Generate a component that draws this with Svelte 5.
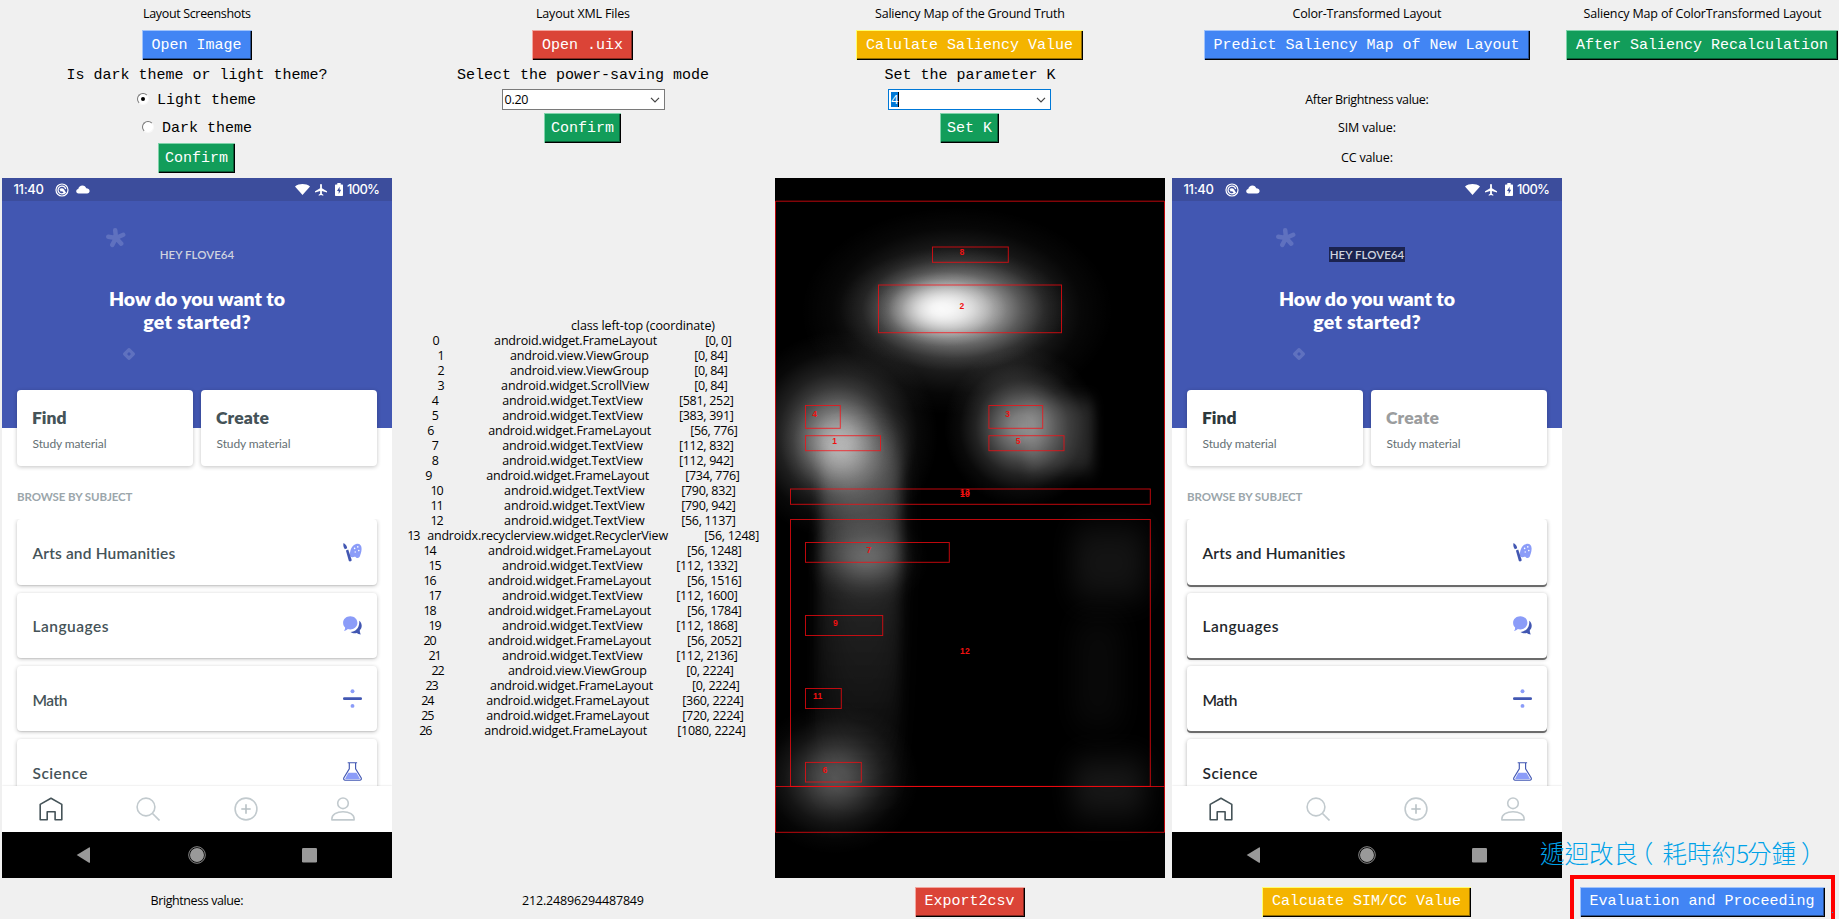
<script>
  // Spreads a label's letters so that it takes the given width.
  function fit(node, width) {
    node.style.letterSpacing = '0px';
    const natural = node.getBoundingClientRect().width;
    const count = Math.max(1, node.textContent.length - 1);
    const spacing = (width - natural) / count;
    node.style.letterSpacing = `${spacing}px`;
    node.style.marginRight = `${-spacing}px`;
  }

  const sizes = {
    'android.widget.FrameLayout': 163,
    'android.view.ViewGroup': 138.7,
    'android.widget.ScrollView': 148,
    'android.widget.TextView': 140.7,
    'androidx.recyclerview.widget.RecyclerView': 241
  };
  const F = 'android.widget.FrameLayout';
  const V = 'android.view.ViewGroup';
  const S = 'android.widget.ScrollView';
  const T = 'android.widget.TextView';
  const R = 'androidx.recyclerview.widget.RecyclerView';

  // class, coordinate, then the starts of the three parts and the end of the last (thirds of a pixel)
  const nodes = [
    [F, '[0, 0]', 98, 283, 917, 997],
    [V, '[0, 84]', 113, 331, 884, 985],
    [V, '[0, 84]', 113, 331, 884, 985],
    [S, '[0, 84]', 113, 304, 884, 985],
    [T, '[581, 252]', 96, 307, 838, 1003],
    [T, '[383, 391]', 96, 307, 838, 1003],
    [F, '[56, 776]', 82, 265, 872, 1015],
    [T, '[112, 832]', 96, 307, 838, 1003],
    [T, '[112, 942]', 96, 307, 838, 1003],
    [F, '[734, 776]', 76, 259, 857, 1021],
    [T, '[790, 832]', 92, 313, 845, 1009],
    [T, '[790, 942]', 92, 313, 845, 1009],
    [T, '[56, 1137]', 92, 313, 845, 1009],
    [R, '[56, 1248]', 22, 82, 914, 1079],
    [F, '[56, 1248]', 71, 265, 862, 1027],
    [T, '[112, 1332]', 86, 307, 830, 1015],
    [F, '[56, 1516]', 71, 265, 862, 1027],
    [T, '[112, 1600]', 86, 307, 830, 1015],
    [F, '[56, 1784]', 71, 265, 862, 1027],
    [T, '[112, 1868]', 86, 307, 830, 1015],
    [F, '[56, 2052]', 71, 265, 862, 1027],
    [T, '[112, 2136]', 86, 307, 830, 1015],
    [V, '[0, 2224]', 95, 325, 860, 1003],
    [F, '[0, 2224]', 77, 271, 877, 1021],
    [F, '[360, 2224]', 64, 259, 848, 1033],
    [F, '[720, 2224]', 64, 259, 848, 1033],
    [F, '[1080, 2224]', 58, 253, 833, 1039]
  ];

  const subjects = [
    { name: 'Arts and Humanities', width: 143, icon: 'arts' },
    { name: 'Languages', width: 76, icon: 'chat' },
    { name: 'Math', width: 35, icon: 'math' },
    { name: 'Science', width: 55, icon: 'flask' }
  ];

  // x1, y1, x2, y2, label, label centre
  const boxes = [
    [157.5, 69, 233.3, 84.3, '8', 187, 73.7],
    [103.5, 107, 286.5, 154.7, '2', 187, 128],
    [30.5, 227.5, 65.3, 250.3, '4', 39.7, 236],
    [30.5, 257.7, 105.5, 272.7, '1', 59.7, 262.3],
    [213.9, 227.5, 267.7, 250.3, '3', 232.8, 236],
    [213.9, 257.7, 289, 272.7, '5', 243.3, 262.3],
    [15.5, 311, 375.3, 326.3, '10', 190, 315.3],
    [15.5, 341.5, 375.3, 608.4, '12', 190, 472.3],
    [30.5, 364.5, 174.3, 384.3, '7', 94, 371.5],
    [30.5, 437.5, 107.7, 457.5, '9', 60.4, 444.7],
    [30.5, 510.5, 66.3, 530.5, '11', 42.7, 518],
    [30.5, 584.4, 86.3, 604, '6', 50, 591.3]
  ];
</script>

{#snippet btn(text, tone, pad = 10)}
  <button class="btn {tone}" style:padding="0 {pad + 0.4}px 0 {pad - 0.4}px">{text}</button>
{/snippet}

{#snippet subjectIcon(kind)}
  <svg class="subject-icon" viewBox="0 0 19 19">
    {#if kind === 'arts'}
      <path d="M13.200.9c3.400-.7 5.600 1.400 5.400 5-.1 3.300-1.300 5.600-1.600 7.200-.6 2.100-2.700 2.500-4 1.300-1-1-2.200-.4-3.400-.2-1.900.2-2.900-1.200-2.700-3.400C7.200 6 9.500 1.700 13.200.9z" fill="#8b9cf8" />
      <g fill="#fff"><circle cx="14.800" cy="3.900" r=".8" /><circle cx="11.600" cy="5.400" r=".8" /><circle cx="15.800" cy="7.600" r=".8" /><circle cx="12.200" cy="9" r=".7" /></g>
      <path d="M.5 0c2 1.200 3.700 3 3.700 5.200l-2.300 1C.4 4.600 0 2.200.5 0z" fill="#4257b2" />
      <path d="M2.900 7.500l2.300-1 3.500 10.400c.2 1.500-2.200 2.300-2.900.9z" fill="#4257b2" />
    {:else if kind === 'chat'}
      <path d="M16.200 4.800c3.300 2.600 3.200 7 .6 9.500 0 1.700.5 3 .9 4.300-1.600-.3-2.900-.9-4-1.700-2.100.7-4.500.3-6.200-1 5 0 9.400-4.400 8.700-11.100z" fill="#4257b2" />
      <path d="M7.300.2c4 0 7.100 2.800 7.100 6.600s-3.200 6.700-7.100 6.700c-.9 0-1.700-.1-2.500-.4-1 1-2.400 1.700-3.900 2 .9-1 1.300-2.300 1.200-3.500C.8 10.400.1 8.700.1 6.800.1 3 3.300.2 7.300.2z" fill="#8b9cf8" />
    {:else if kind === 'math'}
      <rect x="0" y="8.300" width="19" height="2.700" rx="1.300" fill="#4257b2" />
      <circle cx="9.500" cy="2.300" r="1.950" fill="#8b9cf8" /><circle cx="9.500" cy="16.900" r="1.950" fill="#8b9cf8" />
    {:else}
      <path d="M5.300 10.700h8.200l3.200 5.500c.3.600 0 1.100-.7 1.100H3c-.7 0-1-.5-.7-1.100z" fill="#8b9cf8" />
      <path d="M4.700.7h9.400M6.300.9v6L.9 15.800c-.6 1.200 0 2.400 1.300 2.400h14.600c1.300 0 1.900-1.200 1.300-2.400L12.600 6.900v-6" fill="none" stroke="#4257b2" stroke-width="1.150" />
    {/if}
  </svg>
{/snippet}

{#snippet phone(transformed)}
  <div class="phone" class:transformed>
    <div class="status">
      <span class="clock" use:fit={30.5}>11:40</span>
      <svg class="st-ring" viewBox="0 0 14 14">
        <circle cx="7" cy="7" r="6" fill="none" stroke="#fff" stroke-width="1.200" />
        <path d="M9.900 9.500A3.900 3.900 0 1 1 10.700 6" fill="none" stroke="#fff" stroke-width="1.300" />
        <path d="M4.500 6.200a3 3 0 0 1 4.600.3l2 3.200-1.500 1-2.400-2.400-1.600.1z" fill="#fff" />
      </svg>
      <svg class="st-cloud" viewBox="0 0 14 9">
        <path d="M2.600 8.400C1 8.400.2 7.400.2 6.200c0-1.200.9-2 2-2.200C2.800 1.800 4.300.4 6.400.4c2 0 3.300 1.200 3.900 2.900 1.700.1 3.300 1 3.300 2.700 0 1.500-1 2.400-2.500 2.400z" fill="#fff" />
      </svg>
      <svg class="st-wifi" viewBox="0 0 15 11">
        <path d="M0 2.400C4.200-.7 10.800-.7 15 2.400L7.500 11z" fill="#fff" />
      </svg>
      <svg class="st-plane" viewBox="0 0 12 12">
        <path d="M6 0c.6 0 .9.500.9 1.100v3.100L12 7.200v1.300L6.900 7v2.700l1.400 1.100v.9L6 11.100l-2.300.6v-.9l1.400-1.100V7L0 8.500V7.200l5.100-3V1.100C5.100.5 5.400 0 6 0z" fill="#fff" />
      </svg>
      <svg class="st-batt" viewBox="0 0 8 13">
        <path d="M2.300 0h3.400v1.500H7c.6 0 1 .4 1 1V12c0 .6-.4 1-1 1H1c-.6 0-1-.4-1-1V2.500c0-.6.4-1 1-1h1.300z" fill="#fff" />
        <path d="M4.600 3.700L2 7.900h1.700v3L6.200 6.700H4.600z" fill="#3c4d9c" />
      </svg>
      <div class="charge"><span use:fit={33}>100%</span></div>
    </div>
    <div class="hero">
      <svg class="star" viewBox="0 0 20 20">
        <path d="M10 10L9.200 2.300M10 10l7.200-3.200M10 10l5.200 5.600M10 10l-3.700 6.900M10 10L2.300 8.700" stroke="#5f71bf" stroke-width="4.500" stroke-linecap="round" />
      </svg>
      <svg class="gem" viewBox="0 0 12 12">
        <path d="M6 1.700L10.300 6 6 10.300 1.700 6z" fill="none" stroke="#5f71bf" stroke-width="3.300" stroke-linejoin="round" />
      </svg>
      <div class="hey"><span use:fit={74.5}>HEY FLOVE64</span></div>
      <div class="ask"><span use:fit={176}>How do you want to</span></div>
      <div class="ask second"><span use:fit={107.5}>get started?</span></div>
    </div>
    <div class="tiles">
      <div class="tile"><div><b use:fit={34.5}>Find</b></div><div class="sub"><span use:fit={74}>Study material</span></div></div>
      <div class="tile create"><div><b use:fit={53}>Create</b></div><div class="sub"><span use:fit={74}>Study material</span></div></div>
    </div>
    <div class="browse"><span use:fit={115.5}>BROWSE BY SUBJECT</span></div>
    <div class="list">
      {#each subjects as s}
        <div class="item"><span use:fit={s.width}>{s.name}</span>{@render subjectIcon(s.icon)}</div>
      {/each}
    </div>
    <div class="tabs">
      <svg viewBox="0 0 24 24"><path d="M1.200 22.700V7.400L12 1.200l10.800 6.200v15.300h-6.700v-7.900H8.200v7.900z" fill="none" stroke="#455358" stroke-width="1.600" stroke-linejoin="round" /></svg>
      <svg viewBox="0 0 24 24"><circle cx="10" cy="10" r="8.900" fill="none" stroke="#c2cace" stroke-width="1.600" /><path d="M16.500 16.500l7 7" stroke="#c2cace" stroke-width="1.700" /></svg>
      <svg viewBox="0 0 24 24"><circle cx="12" cy="12" r="10.900" fill="none" stroke="#c2cace" stroke-width="1.600" /><path d="M12 7.300v9.400M7.300 12h9.400" stroke="#b8c1c5" stroke-width="1.600" /></svg>
      <svg viewBox="0 0 24 24"><circle cx="12" cy="6.300" r="5.300" fill="none" stroke="#c2cace" stroke-width="1.600" /><path d="M.9 22.900v-1.200c0-4.200 4.700-7 11.100-7s11.100 2.800 11.100 7v1.200z" fill="none" stroke="#c2cace" stroke-width="1.600" stroke-linejoin="round" /></svg>
    </div>
    <svg class="sys" viewBox="0 0 390 46" fill="#999">
      <path d="M74.700 23L87 15.400q1-.4 1 .6v14.200q0 .9-1 .5z" />
      <circle cx="195" cy="23" r="8.300" fill="none" stroke="#999" stroke-width=".9" /><circle cx="195" cy="23" r="7" />
      <rect x="300" y="16" width="15" height="14.500" rx="1.300" />
    </svg>
  </div>
{/snippet}

<main>
  <div class="cell t"><span use:fit={108}>Layout Screenshots</span></div>
  <div class="cell t"><span use:fit={94}>Layout XML Files</span></div>
  <div class="cell t"><span use:fit={190}>Saliency Map of the Ground Truth</span></div>
  <div class="cell t"><span use:fit={149}>Color-Transformed Layout</span></div>
  <div class="cell t"><span use:fit={238}>Saliency Map of ColorTransformed Layout</span></div>

  <div class="cell">{@render btn('Open Image', 'blue')}</div>
  <div class="cell">{@render btn('Open .uix', 'red')}</div>
  <div class="cell">{@render btn('Calulate Saliency Value', 'amber')}</div>
  <div class="cell">{@render btn('Predict Saliency Map of New Layout', 'blue')}</div>
  <div class="cell">{@render btn('After Saliency Recalculation', 'green')}</div>

  <div class="cell mono">Is dark theme or light theme?</div>
  <div class="cell mono">Select the power-saving mode</div>
  <div class="cell mono">Set the parameter K</div>
  <div></div><div></div>

  <label class="cell mono choice"><i class="radio on"></i>Light theme</label>
  <div class="cell">
    <div class="combo"><span use:fit={24}>0.20</span><svg viewBox="0 0 10 6"><path d="M1 .8l4 4 4-4" /></svg></div>
  </div>
  <div class="cell">
    <div class="combo focus"><span class="sel">4</span><svg viewBox="0 0 10 6"><path d="M1 .8l4 4 4-4" /></svg></div>
  </div>
  <div class="cell t"><span use:fit={123.5}>After Brightness value:</span></div>
  <div></div>

  <label class="cell mono choice dark"><i class="radio"></i>Dark theme</label>
  <div class="cell">{@render btn('Confirm', 'green', 7)}</div>
  <div class="cell">{@render btn('Set K', 'green', 7)}</div>
  <div class="cell t"><span use:fit={58}>SIM value:</span></div>
  <div></div>

  <div class="cell">{@render btn('Confirm', 'green', 7)}</div>
  <div></div><div></div>
  <div class="cell t"><span use:fit={52}>CC value:</span></div>
  <div></div>

  <div class="cell">{@render phone(false)}</div>
  <div class="nodes">
    <div class="nodes-head"><span use:fit={144}>class left-top (coordinate)</span></div>
    {#each nodes as [cls, pos, a, b, c, d], i}
      <div class="node" style:padding-left="{a / 3 + 5.800}px" style:grid-template-columns="{(b - a) / 3}px {(c - b) / 3 - 0.200}px auto">
        <div><span use:fit={i > 9 ? 13.300 : 6.700}>{i}</span></div>
        <div><span use:fit={sizes[cls]}>{cls}</span></div>
        <div><span use:fit={(d - c) / 3}>{pos}</span></div>
      </div>
    {/each}
  </div>
  <div class="cell">
    <svg class="saliency" viewBox="0 0 390 700">
      <defs>
        <radialGradient id="glow">
          <stop offset="0" stop-color="#fff" stop-opacity="1" />
          <stop offset=".15" stop-color="#fff" stop-opacity=".91" />
          <stop offset=".3" stop-color="#fff" stop-opacity=".7" />
          <stop offset=".45" stop-color="#fff" stop-opacity=".46" />
          <stop offset=".6" stop-color="#fff" stop-opacity=".25" />
          <stop offset=".8" stop-color="#fff" stop-opacity=".07" />
          <stop offset="1" stop-color="#fff" stop-opacity="0" />
        </radialGradient>
        <linearGradient id="trail" x1="0" y1="0" x2="0" y2="1">
          <stop offset="0" stop-color="#fff" stop-opacity="0" />
          <stop offset=".12" stop-color="#fff" stop-opacity=".26" />
          <stop offset=".34" stop-color="#fff" stop-opacity=".31" />
          <stop offset=".42" stop-color="#fff" stop-opacity=".15" />
          <stop offset=".7" stop-color="#fff" stop-opacity=".08" />
          <stop offset="1" stop-color="#fff" stop-opacity="0" />
        </linearGradient>
        <filter id="soft" x="-60%" y="-60%" width="220%" height="220%" color-interpolation-filters="sRGB"><feGaussianBlur stdDeviation="13 16" /></filter>
        <filter id="edge" x="-60%" y="-20%" width="220%" height="140%" color-interpolation-filters="sRGB"><feGaussianBlur stdDeviation="6 9" /></filter>
      </defs>
      <rect width="390" height="700" fill="#000" />
      <ellipse cx="182" cy="133" rx="156" ry="104" fill="url(#glow)" opacity=".4" />
      <ellipse cx="178" cy="131" rx="114" ry="62" fill="url(#glow)" opacity=".72" />
      <ellipse cx="166" cy="131" rx="66" ry="38" fill="url(#glow)" opacity=".9" />
      <ellipse cx="63" cy="257" rx="100" ry="104" fill="url(#glow)" opacity=".5" />
      <ellipse cx="64" cy="268" rx="58" ry="60" fill="url(#glow)" opacity=".38" />
      <path d="M48 240h78v400H36z" fill="url(#trail)" filter="url(#edge)" opacity=".55" />
      <path d="M62 240h60v400H50z" fill="url(#trail)" filter="url(#soft)" opacity=".5" />
      <ellipse cx="92" cy="382" rx="62" ry="48" fill="url(#glow)" opacity=".2" />
      <ellipse cx="247" cy="249" rx="78" ry="80" fill="url(#glow)" opacity=".54" />
      <rect x="252" y="222" width="67" height="72" fill="#fff" opacity=".13" filter="url(#edge)" />
      <ellipse cx="60" cy="600" rx="84" ry="76" fill="url(#glow)" opacity=".32" />
      <rect x="298" y="350" width="72" height="70" fill="#fff" opacity=".075" filter="url(#soft)" />
      <rect x="298" y="440" width="50" height="110" fill="#fff" opacity=".03" filter="url(#soft)" />
      <rect x="298" y="582" width="72" height="55" fill="#fff" opacity=".09" filter="url(#soft)" />
      <g fill="none" stroke="#ff0a10" stroke-opacity=".74" stroke-width="1">
        <path d="M.5 654.300V23.200h389v631.100zM.5 608.500h389" />
        {#each boxes as [x1, y1, x2, y2]}
          <rect x={x1} y={y1} width={x2 - x1} height={y2 - y1} />
        {/each}
      </g>
      <g class="marks">
        {#each boxes as [, , , , label, cx, cy]}
          <text x={cx} y={cy + 3.200}>{label}</text>
        {/each}
        <text x="190" y="316.500">13</text>
      </g>
    </svg>
  </div>
  <div class="cell">{@render phone(true)}</div>
  <div></div>

  <div class="cell t"><span use:fit={93}>Brightness value:</span></div>
  <div class="cell t"><span use:fit={122}>212.24896294487849</span></div>
  <div class="cell">{@render btn('Export2csv', 'red')}</div>
  <div class="cell">{@render btn('Calcuate SIM/CC Value', 'amber')}</div>
  <div class="cell">{@render btn('Evaluation and Proceeding', 'blue')}</div>

  <div class="note">遞迴改良<span class="open">（</span>耗時約<span class="five">5</span>分鍾<span class="close">）</span></div>
  <div class="mark-box"></div>
  <i class="speck"></i>
</main>

<style>
  :global(body) { background: #f0f0f0; overflow: hidden; }
  main {
    position: relative;
    width: 1839px;
    height: 919px;
    overflow: hidden;
    display: grid;
    grid-template-columns: 394px 378px 396px 398px 273px;
    grid-template-rows: 28px 34px 26px 24px 32px 28px 712px 35px;
    background: #f0f0f0;
    color: #000;
    font: 12.5px/15px "Open Sans", "Noto Sans", sans-serif;
  }
  .cell { display: flex; align-items: center; justify-content: center; min-width: 0; min-height: 0; white-space: nowrap; }
  .t { font-size: 12.5px; padding-bottom: 1.500px; }
  .mono { font: 15px/17px "Liberation Mono", monospace; }
  .btn {
    flex: none;
    box-sizing: border-box;
    height: 30px;
    margin: 0 0 0 -.3px;
    border: 0;
    border-radius: 0;
    font: 15px/17px "Liberation Mono", monospace;
    color: #fff;
    white-space: nowrap;
  }
  .blue { background: #4285f4; box-shadow: inset 1px 1px #a0c3fb, inset -1px -1px #000, inset -2px -2px #274f92; }
  .red { background: #db4437; box-shadow: inset 1px 1px #f3a69f, inset -1px -1px #000, inset -2px -2px #832821; }
  .amber { background: #f4b400; box-shadow: inset 1px 1px #ffff70, inset -1px -1px #000, inset -2px -2px #926c00; }
  .green { background: #129d5a; box-shadow: inset 1px 1px #7fd3aa, inset -1px -1px #000, inset -2px -2px #095e36; }

  .choice { gap: 8px; padding-right: 1px; }
  .dark { padding-right: 0; }
  .radio {
    box-sizing: border-box; width: 12px; height: 12px; margin-top: -2px; border-radius: 50%;
    background: #fff; border: 1.500px solid; border-color: #777 #f8f8f8 #f8f8f8 #777;
    display: flex; align-items: center; justify-content: center;
  }
  .on::after { content: ""; width: 4px; height: 4px; border-radius: 50%; background: #000; }

  .combo {
    box-sizing: border-box; width: 163px; height: 21px; padding: 0 4px 0 2px; margin: -1px 0 0;
    border: 1px solid #7a7a7a; background: #fff; display: flex; align-items: center; justify-content: space-between;
  }
  .combo.focus { border-color: #0078d7; margin-left: -.4px; }
  .combo svg { width: 10px; height: 6px; fill: none; stroke: #444; stroke-width: 1.200; }
  .sel { background: #0078d7; color: #fff; border-right: 1px solid #000; line-height: 15px; }

  .nodes { display: flex; flex-direction: column; justify-content: center; white-space: nowrap; }
  .nodes-head { height: 15px; padding-left: 177px; }
  .node { display: grid; height: 15px; }

  .phone {
    width: 390px; height: 700px; flex: none; display: flex; flex-direction: column; overflow: hidden;
    background: linear-gradient(#4257b2 250px, #fff 250px); font-family: Lato, sans-serif; color: #455358;
  }
  .status { height: 23px; flex: none; display: flex; align-items: center; background: #3c4d9c; color: #fff; font: 500 13px/23px Inter, sans-serif; }
  .status span { font-size: 13px; }
  .clock { margin-left: 11.500px; }
  .st-ring { width: 14px; height: 14px; margin-left: 10.500px; }
  .st-cloud { width: 14px; height: 9px; margin-left: 7px; }
  .st-wifi { width: 15px; height: 11px; margin-left: auto; }
  .st-plane { width: 12px; height: 12px; margin-left: 5px; }
  .st-batt { width: 8px; height: 13px; margin: 0 4px 0 8px; }
  .charge { margin-right: 12px; }
  .hero { position: relative; height: 189px; flex: none; display: flex; flex-direction: column; align-items: center; color: #fff; }
  .star { position: absolute; left: 103.500px; top: 26.500px; width: 20px; height: 20px; }
  .gem { position: absolute; left: 120.500px; top: 147px; width: 12px; height: 12px; }
  .hey { margin-top: 46px; height: 15px; width: 76px; display: flex; justify-content: center; font: 600 11.500px/16px Lato, sans-serif; color: #cfd3df; }
  .ask { margin-top: 25px; height: 23px; font: 800 19.500px/23px Lato, sans-serif; }
  .ask.second { margin-top: 0; }
  .tiles { display: flex; gap: 8px; height: 76px; flex: none; margin: 0 15px; }
  .tile { flex: 1; border-radius: 4px; background: #fff; padding: 17px 15px 0; box-sizing: border-box; box-shadow: 0 1px 4px rgba(0, 0, 0, .24); }
  .tile b { font: 800 17.500px/22px Lato, sans-serif; }
  .tile .sub { margin-top: 7px; padding-left: .5px; font-size: 12px; line-height: 16px; color: #657074; }
  .browse { margin: 23px 15px 15px; height: 15px; flex: none; font: 700 11.500px/16px Lato, sans-serif; color: #9ba6ab; }
  .list { flex: 1; min-height: 0; overflow: hidden; padding: .4px 15px 0; display: flex; flex-direction: column; gap: 7.700px; }
  .item {
    height: 65.500px; flex: none; box-sizing: border-box; border-radius: 4px; padding: 0 15.500px 0 15.500px; background: #fff;
    display: flex; align-items: center; justify-content: space-between; font: 600 15.500px/20px Lato, sans-serif;
    box-shadow: 0 1px 4px rgba(0, 0, 0, .24), 0 1px 1px rgba(0, 0, 0, .08);
  }
  .item span { padding-top: 2px; }
  .subject-icon { width: 19px; height: 19px; }
  .tabs { position: relative; height: 46px; flex: none; display: grid; grid-template-columns: repeat(4, 1fr); place-items: center; background: #fff; box-shadow: 0 0 2px rgba(0, 0, 0, .15); }
  .tabs svg { width: 24px; height: 24px; }
  .sys { height: 46px; width: 390px; flex: none; background: #000; position: relative; }
  .transformed .hey { background: #1b2350; }
  .transformed .tile b { color: #2c383c; }
  .transformed .create b { color: #9b9d9e; }
  .transformed .item { color: #1f282c; box-shadow: 0 2px 0 #6b6b6b, 0 1px 4px rgba(0, 0, 0, .3); }

  .saliency { width: 390px; height: 700px; flex: none; }
  .marks { font: 700 8.500px "Liberation Sans", sans-serif; fill: #f01010; text-anchor: middle; letter-spacing: .3px; }

  .note {
    position: absolute; left: 1540px; top: 836px; display: flex;
    font: 300 24.500px/34px "Noto Sans CJK TC", sans-serif; color: #00a2e8; white-space: nowrap;
  }
  .open, .close { font-feature-settings: "halt"; }
  .open { padding: 0 9.200px 0 3px; }
  .close { padding-left: 5px; }
  .five { width: 11px; }
  .mark-box { position: absolute; left: 1570px; top: 875px; width: 257px; height: 60px; border: 4px solid #f00; }
  .speck { position: absolute; left: 1832px; top: 912px; width: 1px; height: 1px; background: #00a2e8; }
</style>
